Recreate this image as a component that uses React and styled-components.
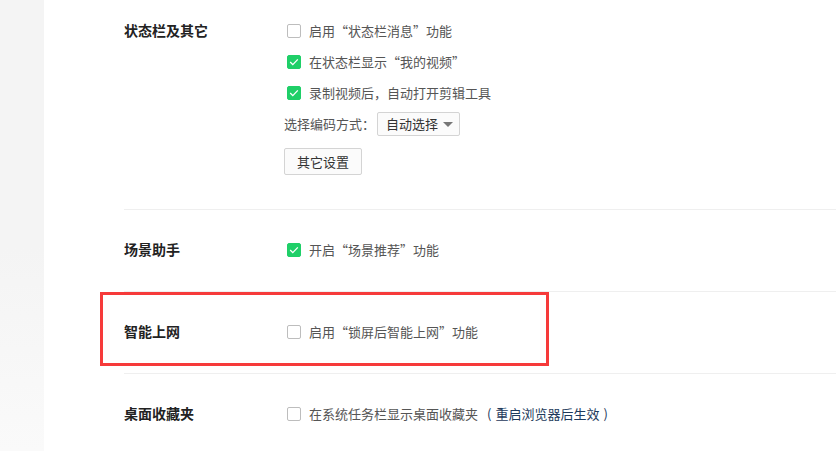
import React from "react";
import styled, { createGlobalStyle } from "styled-components";

const Global = createGlobalStyle`
  html, body { margin: 0; padding: 0; background: #fff; }
  body {
    font-family: "Noto Sans CJK SC", "Noto Sans", "Liberation Sans", sans-serif;
    overflow: hidden;
  }
`;

const Page = styled.div`
  display: flex;
  width: 836px;
  height: 451px;
  overflow: hidden;
  background: #fff;
`;

const Sidebar = styled.div`
  width: 44px;
  flex: none;
  background: linear-gradient(to bottom, #f4f4f4 0%, #f4f4f4 55%, #fafafa 100%);
`;

const Main = styled.div`
  flex: 1;
  padding-left: 80px;
  display: flex;
  flex-direction: column;
`;

const Section = styled.section`
  position: relative;
  display: flex;
  padding: ${(p) => p.$pad};
  border-top: ${(p) => (p.$first ? "none" : "1px solid #efefef")};
`;

const Label = styled.div`
  width: 160px;
  flex: none;
  height: 31px;
  line-height: 31px;
  font-size: 14px;
  font-weight: 700;
  color: #222;
`;

const Options = styled.div`
  display: flex;
  flex-direction: column;
`;

const Row = styled.div`
  display: flex;
  align-items: center;
  height: 31px;
  font-size: 13px;
  color: #555;
  white-space: nowrap;
`;

const Box = styled.span`
  width: 14px;
  height: 14px;
  box-sizing: border-box;
  margin: 0 8px 0 3px;
  border-radius: 2px;
  flex: none;
  display: flex;
  align-items: center;
  justify-content: center;
  border: 1px solid ${(p) => (p.$checked ? "#1fcf68" : "#bdbdbd")};
  background: ${(p) => (p.$checked ? "#1fcf68" : "#fff")};
`;

const Note = styled.span`
  color: #1e3a5c;
  margin-left: 9px;
  display: inline-flex;
  gap: 4px;
`;

const Select = styled.div`
  display: flex;
  align-items: center;
  height: 24px;
  box-sizing: border-box;
  padding: 0 6px 0 8px;
  margin-left: 2px;
  border: 1px solid #d4d4d4;
  border-radius: 2px;
  background: #fbfbfb;
  color: #333;
  gap: 5px;
`;

const Caret = styled.span`
  width: 0;
  height: 0;
  border-left: 5px solid transparent;
  border-right: 5px solid transparent;
  border-top: 5px solid #777;
  margin-top: 1px;
`;

const Button = styled.button`
  margin-top: 9px;
  width: 78px;
  height: 27px;
  box-sizing: border-box;
  border: 1px solid #d4d4d4;
  border-radius: 2px;
  background: #fbfbfb;
  font-family: inherit;
  font-size: 13px;
  color: #333;
  padding: 0;
  align-self: flex-start;
`;

const Highlight = styled.div`
  position: absolute;
  left: -24px;
  top: 0px;
  width: 449px;
  height: 74px;
  box-sizing: border-box;
  border: 3px solid #f63a3a;
  pointer-events: none;
`;

function Check({ checked }) {
  return (
    <Box $checked={checked}>
      {checked && (
        <svg width="10" height="8" viewBox="0 0 10 8">
          <path d="M1.2 4 L3.8 6.6 L8.8 1.4" fill="none" stroke="#fff" strokeWidth="1.3" />
        </svg>
      )}
    </Box>
  );
}

function Option({ checked, children }) {
  return (
    <Row>
      <Check checked={checked} />
      <span>{children}</span>
    </Row>
  );
}

export default function App() {
  return (
    <>
      <Global />
      <Page lang="zh-CN">
        <Sidebar />
        <Main>
          <Section $first $pad="15px 0 34px 0">
            <Label>状态栏及其它</Label>
            <Options>
              <Option>启用“状态栏消息”功能</Option>
              <Option checked>在状态栏显示“我的视频”</Option>
              <Option checked>录制视频后，自动打开剪辑工具</Option>
              <Row>
                <span>选择编码方式：</span>
                <Select>
                  <span>自动选择</span>
                  <Caret />
                </Select>
              </Row>
              <Button>其它设置</Button>
            </Options>
          </Section>
          <Section $pad="24px 0 26px 0">
            <Label>场景助手</Label>
            <Options>
              <Option checked>开启“场景推荐”功能</Option>
            </Options>
          </Section>
          <Section $pad="24px 0 26px 0">
            <Label>智能上网</Label>
            <Options>
              <Option>启用“锁屏后智能上网”功能</Option>
            </Options>
            <Highlight />
          </Section>
          <Section $pad="24px 0 26px 0">
            <Label>桌面收藏夹</Label>
            <Options>
              <Option>
                在系统任务栏显示桌面收藏夹
                <Note>
                  <span>(</span>
                  <span>重启浏览器后生效</span>
                  <span>)</span>
                </Note>
              </Option>
            </Options>
          </Section>
        </Main>
      </Page>
    </>
  );
}
